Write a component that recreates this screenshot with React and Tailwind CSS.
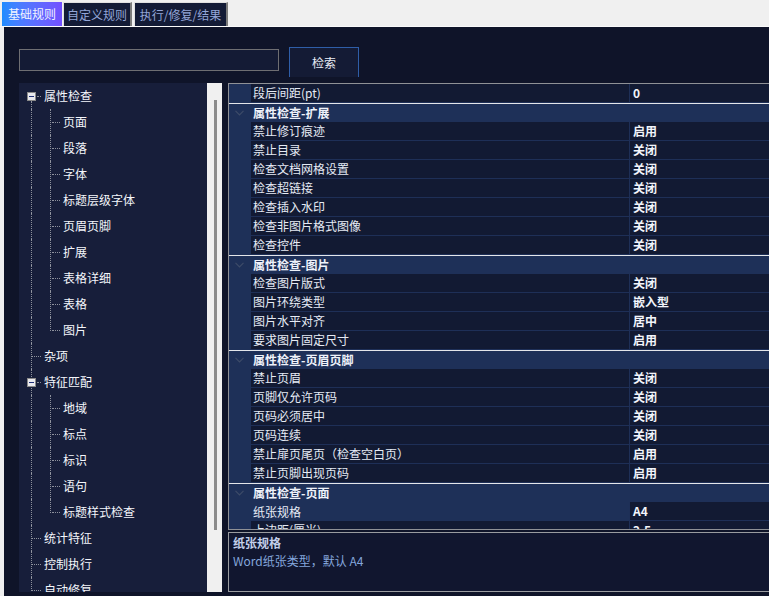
import React from "react";

const tree = [
  { t: "属性检查", open: true, children: ["页面", "段落", "字体", "标题层级字体", "页眉页脚", "扩展", "表格详细", "表格", "图片"] },
  { t: "杂项" },
  { t: "特征匹配", open: true, children: ["地域", "标点", "标识", "语句", "标题样式检查"] },
  { t: "统计特征" },
  { t: "控制执行" },
  { t: "自动修复" },
];

const rows = [];
tree.forEach((n, i) => {
  rows.push({ level: 1, t: n.t, box: !!n.children, first: i === 0 });
  (n.children || []).forEach((c, j) => {
    rows.push({ level: 2, t: c, last: j === n.children.length - 1, firstChild: j === 0 });
  });
});

const grid = [
  { n: "段后间距(pt)", v: "0" },
  { h: "属性检查-扩展" },
  { n: "禁止修订痕迹", v: "启用" },
  { n: "禁止目录", v: "关闭" },
  { n: "检查文档网格设置", v: "关闭" },
  { n: "检查超链接", v: "关闭" },
  { n: "检查插入水印", v: "关闭" },
  { n: "检查非图片格式图像", v: "关闭" },
  { n: "检查控件", v: "关闭" },
  { h: "属性检查-图片" },
  { n: "检查图片版式", v: "关闭" },
  { n: "图片环绕类型", v: "嵌入型" },
  { n: "图片水平对齐", v: "居中" },
  { n: "要求图片固定尺寸", v: "启用" },
  { h: "属性检查-页眉页脚" },
  { n: "禁止页眉", v: "关闭" },
  { n: "页脚仅允许页码", v: "关闭" },
  { n: "页码必须居中", v: "关闭" },
  { n: "页码连续", v: "关闭" },
  { n: "禁止扉页尾页（检查空白页）", v: "启用" },
  { n: "禁止页脚出现页码", v: "启用" },
  { h: "属性检查-页面" },
  { n: "纸张规格", v: "A4", sel: true },
  { n: "上边距(厘米)", v: "2.5" },
];

function TreeRow({ r }) {
  return (
    <div className="relative h-[26px] shrink-0">
      {r.level === 1 && r.first ? (
        <span className="absolute left-[12px] top-[18px] bottom-0 border-l border-dotted border-[#8d919c]" />
      ) : (
        <span className="absolute left-[12px] top-0 bottom-0 border-l border-dotted border-[#8d919c]" />
      )}
      {r.level === 1 && r.box && (
        <>
          <span className="absolute left-[8px] top-[9px] w-[9px] h-[9px] border border-[#8a8a8a] bg-[#e9e9ee] flex items-center justify-center">
            <span className="block w-[5px] h-[1px] bg-[#1f2f78]" />
          </span>
          <span className="absolute left-[18px] top-[13px] w-[4px] border-t border-dotted border-[#8d919c]" />
        </>
      )}
      {r.level === 1 && !r.box && (
        <span className="absolute left-[13px] top-[13px] w-[9px] border-t border-dotted border-[#8d919c]" />
      )}
      {r.level === 2 && (
        <>
          <span
            className={
              r.last
                ? "absolute left-[31px] top-0 h-[14px] border-l border-dotted border-[#8d919c]"
                : "absolute left-[31px] top-0 bottom-0 border-l border-dotted border-[#8d919c]"
            }
          />
          <span className="absolute left-[33px] top-[13px] w-[8px] border-t border-dotted border-[#8d919c]" />
        </>
      )}
      <span
        className={
          (r.level === 1 ? "left-[25px]" : "left-[44px]") +
          " absolute top-0 h-[26px] flex items-center text-[12px] leading-none text-[#f4f6fb] whitespace-nowrap"
        }
      >
        {r.t}
      </span>
    </div>
  );
}

function GridRow({ g }) {
  if (g.h) {
    return (
      <div className="h-[19px] shrink-0 flex items-center bg-[#1e3058] border-t border-[#e4e6ea]">
        <div className="w-[22px] flex items-center justify-center">
          <svg width="9" height="6" viewBox="0 0 9 6" className="ml-[-2px]">
            <path d="M0.5 0.8 L4.5 4.8 L8.5 0.8" fill="none" stroke="#3d4b68" strokeWidth="1.2" />
          </svg>
        </div>
        <span className="pl-[2px] text-[12px] leading-none font-bold text-[#eef2fa] whitespace-nowrap">{g.h}</span>
      </div>
    );
  }
  return (
    <div className="h-[19px] shrink-0 flex">
      <div className="w-[22px] shrink-0 bg-[#1e3058]" />
      <div
        className={
          (g.sel ? "bg-[#1e3058]" : "bg-[#121a33] border-b border-[#1e2f57]") +
          " w-[378px] shrink-0 flex items-center pl-[2px] text-[12px] leading-none text-[#e6ebf5] whitespace-nowrap"
        }
      >
        {g.n}
      </div>
      <div className="flex-1 bg-[#121a33] border-l border-b border-[#1e2f57] flex items-center pl-[3px] text-[12px] leading-none font-bold text-[#f2f5fb] whitespace-nowrap">
        {g.v}
      </div>
    </div>
  );
}

export default function App() {
  return (
    <div className="w-[769px] h-[596px] overflow-hidden bg-[#f0f0f0] flex flex-col font-['Noto_Sans_CJK_SC','Noto_Sans',sans-serif]">
      <div className="h-[27px] shrink-0 flex items-start pt-[2px] pl-[2px] gap-[1px] border-b border-[#fafafa]">
        <div className="h-[24px] w-[60px] flex items-center justify-center bg-gradient-to-r from-[#1d8cff] to-[#7350ff] text-[12px] leading-none text-[#f2f4ff]">
          基础规则
        </div>
        <div className="h-[24px] w-[69px] flex items-center justify-center bg-[#131b36] border-t border-l border-[#e0e0e0] border-r-2 border-r-[#7c7c7c] text-[12px] leading-none text-[#93a6d8]">
          自定义规则
        </div>
        <div className="h-[24px] w-[94px] ml-[1px] flex items-center justify-center bg-[#131b36] border-t border-l border-[#e0e0e0] border-r-2 border-r-[#7c7c7c] text-[12px] leading-none text-[#93a6d8]">
          执行/修复/结果
        </div>
      </div>

      <div className="flex-1 ml-[4px] bg-[#0f1429] flex flex-col pl-[15px] pt-[20px]">
        <div className="flex items-start h-[30px] shrink-0">
          <div className="mt-[2px] w-[260px] h-[22px] border border-[#6e6e72] bg-[#141b35]" />
          <div className="ml-[10px] w-[70px] h-[30px] border-t border-l border-r border-[#2f5ea8] bg-[#141b35] flex items-center justify-center text-[12px] leading-none text-[#e8ecf6]">
            检索
          </div>
        </div>

        <div className="mt-[6px] flex h-[509px] shrink-0">
          <div className="w-[188px] shrink-0 bg-[#171e3a] overflow-hidden flex flex-col">
            {rows.map((r, i) => (
              <TreeRow key={i} r={r} />
            ))}
          </div>
          <div className="w-[15px] shrink-0 bg-[#f0f0f0] h-[509px]">
            <div className="ml-[7px] mt-[17px] w-[3px] h-[430px] bg-[#8b8b8b]" />
          </div>

          <div className="ml-[6px] flex-1 flex flex-col">
            <div className="h-[447px] shrink-0 border-t border-l border-b border-[#8f9196] bg-[#121a33] overflow-hidden flex flex-col">
              {grid.map((g, i) => (
                <GridRow key={i} g={g} />
              ))}
            </div>
            <div className="mt-[2px] h-[60px] shrink-0 border-t border-l border-b border-[#9a9ca0] bg-[#11162f] pl-[4px] pt-[1px] flex flex-col">
              <div className="h-[18px] flex items-center text-[12px] leading-none font-bold text-[#c3cfea]">纸张规格</div>
              <div className="h-[18px] flex items-center text-[12px] leading-none text-[#84a6dc]">Word纸张类型，默认 A4</div>
            </div>
          </div>
        </div>
      </div>
    </div>
  );
}
